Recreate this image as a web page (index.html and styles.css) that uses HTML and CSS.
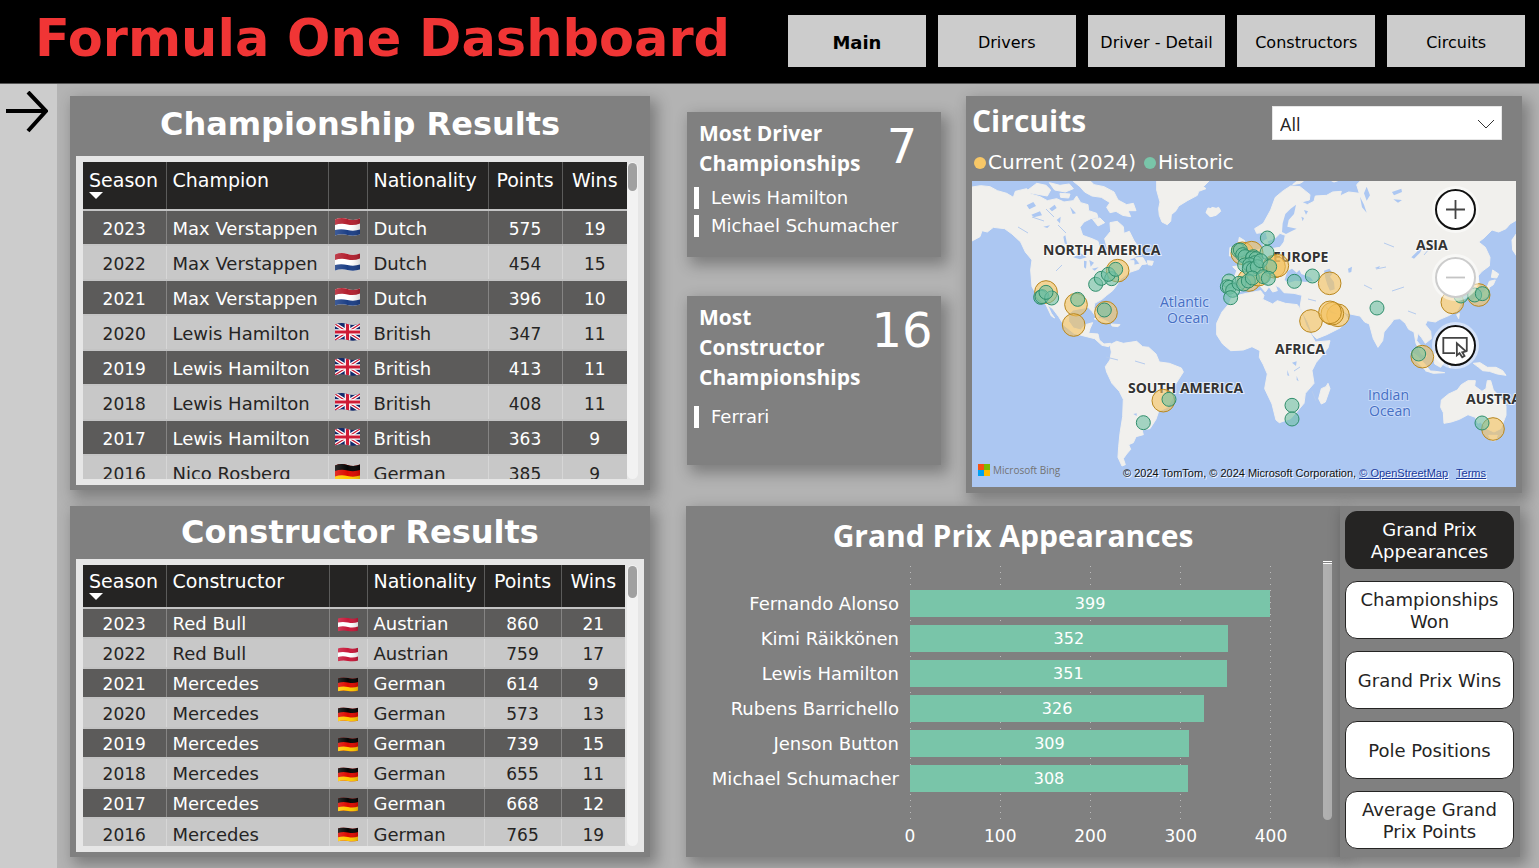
FILE: index.html
```html
<!DOCTYPE html>
<html lang="en">
<head>
<meta charset="utf-8">
<title>Formula One Dashboard</title>
<link rel="stylesheet" href="styles.css">
</head>
<body>
<svg class="defs" aria-hidden="true">
  <defs>
    <clipPath id="wave"><path d="M0 1.5Q6 -1 12.500 1T25 .5V16.500Q19 18.500 12.500 17T0 17.500Z"/></clipPath>
    <linearGradient id="sheen"><stop offset="0" stop-color="#fff" stop-opacity=".15"/><stop offset=".5" stop-color="#fff" stop-opacity="0"/><stop offset="1" stop-color="#000" stop-opacity=".15"/></linearGradient>
    <symbol id="nl" viewBox="0 0 25 18"><g clip-path="url(#wave)"><path fill="#fff" d="M0 0h25v18H0z"/><path fill="#b3202f" d="M0 0H25V5.500Q19 8 12.500 6.500T0 7Z"/><path fill="#1c3f86" d="M0 18H25V11.500Q19 13.500 12.500 12T0 12Z"/><path fill="url(#sheen)" d="M0 0h25v18H0z"/></g></symbol>
    <symbol id="gb" viewBox="0 0 25 18"><g clip-path="url(#wave)"><path fill="#12296b" d="M0 0h25v18H0z"/><path stroke="#fff" stroke-width="3.600" d="M0 1l25 16M25 1L0 17"/><path stroke="#cf1b35" stroke-width="1.300" d="M0 1l25 16M25 1L0 17"/><path stroke="#fff" stroke-width="5.600" d="M12.500 0v18M0 9h25"/><path stroke="#cf1b35" stroke-width="3.200" d="M12.500 0v18M0 9h25"/></g></symbol>
    <symbol id="de" viewBox="0 0 25 18"><g clip-path="url(#wave)"><path fill="#dd0a00" d="M0 0h25v18H0z"/><path fill="#060606" d="M0 0H25V6Q19 8 12.500 6.500T0 7Z"/><path fill="#ffc800" d="M0 18H25V11.500Q19 13.500 12.500 12T0 12.500Z"/><path fill="url(#sheen)" d="M0 0h25v18H0z"/></g></symbol>
    <symbol id="at" viewBox="0 0 25 18"><g clip-path="url(#wave)"><path fill="#c8193a" d="M0 0h25v18H0z"/><path fill="#fff" d="M0 6.500Q6 5 12.500 6.500T25 6V11.500Q19 13.500 12.500 12T0 12Z"/><path fill="url(#sheen)" d="M0 0h25v18H0z"/></g></symbol>
  </defs>
</svg>

<header class="topbar">
  <h1 class="brand">Formula One Dashboard</h1>
  <nav class="tabs">
    <button class="tab tab-on" type="button">Main</button>
    <button class="tab" type="button">Drivers</button>
    <button class="tab" type="button">Driver - Detail</button>
    <button class="tab" type="button">Constructors</button>
    <button class="tab" type="button">Circuits</button>
  </nav>
</header>

<div class="page">
  <aside class="rail">
    <button class="expand" type="button" aria-label="Open filters">
      <svg viewBox="0 0 42 42"><path d="M0 20H40M22 1L40 20L22 40"/></svg>
    </button>
  </aside>

  <main class="board">
    <div class="left">
      <section class="panel results">
        <h2 class="title">Championship Results</h2>
        <div class="frame">
          <div class="view view-drivers">
            <table class="grid grid-drivers">
              <colgroup><col class="c-season"><col class="c-name"><col class="c-flag"><col class="c-nat"><col class="c-pts"><col class="c-wins"></colgroup>
              <thead><tr><th>Season<span class="sort"></span></th><th>Champion</th><th></th><th>Nationality</th><th class="n">Points</th><th class="n">Wins</th></tr></thead>
              <tbody>
                <tr><td>2023</td><td>Max Verstappen</td><td><svg class="flag"><use href="#nl"/></svg></td><td>Dutch</td><td>575</td><td>19</td></tr>
                <tr><td>2022</td><td>Max Verstappen</td><td><svg class="flag"><use href="#nl"/></svg></td><td>Dutch</td><td>454</td><td>15</td></tr>
                <tr><td>2021</td><td>Max Verstappen</td><td><svg class="flag"><use href="#nl"/></svg></td><td>Dutch</td><td>396</td><td>10</td></tr>
                <tr><td>2020</td><td>Lewis Hamilton</td><td><svg class="flag"><use href="#gb"/></svg></td><td>British</td><td>347</td><td>11</td></tr>
                <tr><td>2019</td><td>Lewis Hamilton</td><td><svg class="flag"><use href="#gb"/></svg></td><td>British</td><td>413</td><td>11</td></tr>
                <tr><td>2018</td><td>Lewis Hamilton</td><td><svg class="flag"><use href="#gb"/></svg></td><td>British</td><td>408</td><td>11</td></tr>
                <tr><td>2017</td><td>Lewis Hamilton</td><td><svg class="flag"><use href="#gb"/></svg></td><td>British</td><td>363</td><td>9</td></tr>
                <tr><td>2016</td><td>Nico Rosberg</td><td><svg class="flag"><use href="#de"/></svg></td><td>German</td><td>385</td><td>9</td></tr>
              </tbody>
            </table>
            <div class="track"><div class="thumb"></div></div>
          </div>
        </div>
      </section>

      <section class="panel results">
        <h2 class="title title-tight">Constructor Results</h2>
        <div class="frame">
          <div class="view view-teams">
            <table class="grid grid-teams">
              <colgroup><col class="c-season"><col class="c-name"><col class="c-flag"><col class="c-nat"><col class="c-pts"><col class="c-wins"></colgroup>
              <thead><tr><th>Season<span class="sort"></span></th><th>Constructor</th><th></th><th>Nationality</th><th class="n">Points</th><th class="n">Wins</th></tr></thead>
              <tbody>
                <tr><td>2023</td><td>Red Bull</td><td><svg class="flag"><use href="#at"/></svg></td><td>Austrian</td><td>860</td><td>21</td></tr>
                <tr><td>2022</td><td>Red Bull</td><td><svg class="flag"><use href="#at"/></svg></td><td>Austrian</td><td>759</td><td>17</td></tr>
                <tr><td>2021</td><td>Mercedes</td><td><svg class="flag"><use href="#de"/></svg></td><td>German</td><td>614</td><td>9</td></tr>
                <tr><td>2020</td><td>Mercedes</td><td><svg class="flag"><use href="#de"/></svg></td><td>German</td><td>573</td><td>13</td></tr>
                <tr><td>2019</td><td>Mercedes</td><td><svg class="flag"><use href="#de"/></svg></td><td>German</td><td>739</td><td>15</td></tr>
                <tr><td>2018</td><td>Mercedes</td><td><svg class="flag"><use href="#de"/></svg></td><td>German</td><td>655</td><td>11</td></tr>
                <tr><td>2017</td><td>Mercedes</td><td><svg class="flag"><use href="#de"/></svg></td><td>German</td><td>668</td><td>12</td></tr>
                <tr><td>2016</td><td>Mercedes</td><td><svg class="flag"><use href="#de"/></svg></td><td>German</td><td>765</td><td>19</td></tr>
              </tbody>
            </table>
            <div class="track"><div class="thumb"></div></div>
          </div>
        </div>
      </section>
    </div>

    <div class="right">
      <div class="upper">
        <div class="records">
          <section class="panel record">
            <div class="record-head"><h3 class="record-title">Most Driver Championships</h3><p class="record-value">7</p></div>
            <ul class="holders"><li>Lewis Hamilton</li><li>Michael Schumacher</li></ul>
          </section>
          <section class="panel record">
            <div class="record-head"><h3 class="record-title">Most Constructor Championships</h3><p class="record-value">16</p></div>
            <ul class="holders holders-low"><li>Ferrari</li></ul>
          </section>
        </div>

        <section class="panel circuits">
          <div class="circuits-head">
            <h2 class="heading">Circuits</h2>
            <label class="picker">
              <select class="picker-box" aria-label="Circuit"><option>All</option></select>
              <svg class="chevron" viewBox="0 0 18 10"><path d="M1 1l8 8 8-8"/></svg>
            </label>
          </div>
          <ul class="legend"><li><i class="dot dot-now"></i>Current (2024)</li><li><i class="dot dot-old"></i>Historic</li></ul>
          <div class="map">
            <svg class="world" viewBox="0 0 544 306" preserveAspectRatio="xMidYMid slice" role="img" aria-label="World map of circuits">
              <g class="land" transform="translate(-12 -11) scale(.33333)">
                <path d="M30 52L62 47 90 50 112 62 140 70 160 82 166 64 200 56 212 72 240 80 262 92 290 86 312 96 340 92 350 78 362 98 384 104 386 122 410 130 414 142 392 146 372 156 360 172 368 196 396 206 414 214 420 238 430 252 442 236 434 206 452 184 450 158 472 154 490 170 492 190 508 184 522 212 545 246 524 262 500 272 522 272 522 286 548 280 536 298 512 306 500 314 482 326 470 346 458 362 440 376 426 388 404 400 402 414 418 438 412 446 396 424 384 412 360 416 340 420 326 432 326 454 340 474 362 480 376 464 398 458 390 476 386 490 414 492 418 510 432 522 452 520 446 530 426 526 404 506 372 498 342 490 312 466 296 440 278 416 262 404 274 430 284 444 274 438 258 404 236 386 216 350 212 300 216 270 196 246 182 216 156 192 134 176 100 172 82 186 66 182 60 200 34 214Z"/>
                <path d="M196 66L230 40 258 46 272 60 262 78 228 72ZM268 38L300 46 328 42 340 56 316 66 284 60ZM340 34H392L402 44 432 50 462 66 474 90 500 104 520 100 528 122 504 122 512 140 488 136 468 124 450 128 440 112 450 98 424 82 396 78 374 66 360 50ZM300 70L330 72 326 84 302 82ZM350 104L370 112 362 124 346 116ZM398 148L420 144 434 158 414 168ZM526 264L548 262 560 282 542 284ZM562 272L580 274 576 286 564 284Z"/>
                <path d="M590 30H750L730 50 738 56 716 64 712 76 682 92 656 108 648 122 634 134 632 154 622 164 606 156 598 136 596 116 600 96 590 60ZM738 128L744 114 762 118 776 112 782 124 768 136 752 140ZM402 446L424 446 448 458 430 456ZM454 462L480 464 474 470 456 468Z"/>
                <path d="M450 524L470 514 490 520 530 514 548 530 566 532 588 552 598 576 628 580 664 594 670 606 656 628 642 650 638 684 622 712 596 724 588 748 570 776 546 780 550 794 528 800 520 818 506 824 512 838 500 852 490 866 496 884 486 888 474 862 476 830 480 790 488 740 490 688 478 664 456 640 440 606 436 590 450 570 454 546Z"/>
              </g>
              <g class="land" transform="translate(228 -11) scale(.33333)">
                <path d="M70 318L104 320 110 302 98 290 122 286 128 272 148 266 158 248 176 238 190 236 190 214 200 208 206 226 212 236 240 232 252 216 256 196 240 190 226 204 204 212 198 186 170 190 164 176 190 160 212 120 226 82 250 62 272 48 300 50 330 74 328 90 304 96 322 104 342 94 346 78 380 76 398 66 424 64 420 78 446 66 478 70 470 44 484 30H950V150L930 162 918 176 896 186 876 180 852 204 836 216 856 232 870 262 868 288 846 304 834 318 838 344 826 366 814 370 812 348 796 340 780 340 764 352 776 364 766 378 784 396 772 422 748 436 720 448 706 456 682 452 676 464 692 484 694 506 676 520 664 502 654 490 650 512 668 534 680 560 664 552 648 520 642 486 626 478 616 460 600 446 582 448 572 462 552 486 548 512 534 532 520 506 508 462 494 456 480 438 440 430 426 420 440 440 446 450 420 474 380 494 350 506 338 494 324 456 300 412 306 376 282 370 252 368 238 352 226 346 232 362 218 366 204 346 186 322 172 312 180 332 206 352 196 366 182 350 160 326 144 328 128 348 122 364 98 376 70 366Z"/>
                <path d="M96 380L140 370 182 362 192 376 188 388 218 402 232 392 256 400 292 404 304 424 318 466 334 494 346 516 390 512 384 534 348 578 336 602 342 640 316 670 312 700 290 726 272 746 238 758 228 750 216 702 194 656 202 612 190 584 178 562 180 542 156 530 130 540 92 542 68 522 50 494 50 460 66 426 88 400Z"/>
                <path d="M384 640L390 656 376 696 364 702 356 686 364 656 378 650ZM118 202L134 212 132 230 146 252 136 264 112 266 122 248 114 226ZM90 232L108 232 106 256 88 258ZM20 128L36 112 60 118 52 132 30 140ZM278 44L300 40 310 34 290 34ZM390 30L420 30 402 36ZM868 334L886 330 880 344 868 352 862 378 830 392 818 390 838 378 858 360ZM878 300L896 312 890 324 874 322ZM770 434L778 430 776 446ZM738 474L752 476 748 492 764 506 752 504 740 490ZM632 546L650 556 676 584 690 602 676 600 652 576ZM676 602L706 604 734 608 700 610ZM700 556L724 536 742 544 736 572 722 592 704 582ZM748 560L770 556 764 568 774 588 756 580 750 594 744 580ZM820 580L840 578 862 592 888 592 908 602 918 616 892 612 868 604 848 602 836 592ZM724 690L746 672 772 660 784 644 804 632 826 632 824 648 846 664 858 656 862 632 872 632 880 660 900 680 918 708 918 736 902 776 882 786 856 774 842 756 834 760 826 742 804 734 778 748 754 756 732 760 730 728 722 712ZM866 796L892 796 886 812 874 812ZM936 210L950 190V258L938 240Z"/>
              </g>
              <g class="water" transform="translate(228 -11) scale(.33333)">
                <path d="M254 330L262 304 276 296 290 308 298 300 304 312 330 322 340 332 318 336 286 332 266 338ZM372 302L388 296 398 310 390 320 402 336 404 358 390 362 382 344 376 324ZM288 104L282 132 266 150 262 170 290 176 274 184 258 192 246 186 248 160 256 132 272 116ZM444 296L456 290 454 306 446 308ZM524 294L540 288 536 296ZM634 262L654 242 668 232 660 248 642 266ZM376 408L396 424 412 432 394 430 380 416ZM312 120L324 124 318 134ZM304 140L312 144 308 154ZM276 578L290 574 288 588ZM262 600L268 618 262 616ZM290 618L296 634 290 630ZM246 540L252 540 250 548ZM480 80L492 104 500 128 486 112ZM500 50L510 76 500 92 492 70ZM576 66L604 56 606 66 582 76ZM580 88L606 90 594 98Z"/>
              </g>
              <g class="water" transform="translate(-12 -11) scale(.33333)">
                <path d="M200 106L220 96 228 108 208 118ZM214 134L240 124 246 136 222 142ZM268 116L284 104 290 114 276 124ZM290 150L302 140 300 160ZM310 200L316 196 322 226 314 220ZM340 262L362 250 380 262 360 268ZM372 272L380 274 378 296 372 292ZM388 270L402 278 392 290ZM396 296L416 292 404 302ZM250 170L270 166 262 174ZM330 110L348 130 338 132ZM520 732L530 730 530 738Z"/>
              </g>
              <path class="river" d="M84 90l6-6M134 176l12 3M163 180l10 3M404 88l10-2M412 62l10 4M420 110l12-4M436 130l8 3M392 104l8 4M336 118l8 2M340 210l4 10M322 190l6-4M46 46l10 6M60 36l12 4M86 44l8 8M74 28l8 8M452 74l10-12"/>
              <g class="place">
                <text x="71" y="74">NORTH AMERICA</text>
                <text x="156" y="212">SOUTH AMERICA</text>
                <text x="301" y="81">EUROPE</text>
                <text x="303" y="173">AFRICA</text>
                <text x="444" y="69">ASIA</text>
                <text x="494" y="223">AUSTRALIA</text>
              </g>
              <g class="sea">
                <text x="188" y="126">Atlantic</text><text x="195" y="142">Ocean</text>
                <text x="396" y="219">Indian</text><text x="397" y="235">Ocean</text>
              </g>
              <g transform="translate(-12 -11) scale(.33333)">
                <g class="now"><circle cx="258" cy="366" r="34"/><circle cx="348" cy="404" r="34"/><circle cx="341" cy="465" r="34"/><circle cx="438" cy="428" r="34"/><circle cx="473" cy="302" r="34"/><circle cx="610" cy="692" r="34"/></g>
                <g class="old"><circle cx="242" cy="382" r="21"/><circle cx="246" cy="380" r="21"/><circle cx="275" cy="384" r="21"/><circle cx="258" cy="367" r="21"/><circle cx="353" cy="388" r="21"/><circle cx="433" cy="420" r="21"/><circle cx="407" cy="343" r="21"/><circle cx="424" cy="325" r="21"/><circle cx="455" cy="326" r="21"/><circle cx="445" cy="313" r="21"/><circle cx="467" cy="298" r="21"/><circle cx="627" cy="688" r="21"/><circle cx="550" cy="758" r="21"/></g>
              </g>
              <g transform="translate(228 -11) scale(.33333)">
                <g class="now"><circle cx="127" cy="250" r="34"/><circle cx="155" cy="248" r="34"/><circle cx="147" cy="330" r="34"/><circle cx="175" cy="314" r="34"/><circle cx="222" cy="290" r="34"/><circle cx="232" cy="287" r="34"/><circle cx="333" cy="453" r="34"/><circle cx="414" cy="436" r="34"/><circle cx="397" cy="431" r="34"/><circle cx="390" cy="427" r="34"/><circle cx="389" cy="340" r="34"/><circle cx="757" cy="397" r="34"/><circle cx="836" cy="375" r="34"/><circle cx="667" cy="560" r="34"/><circle cx="879" cy="777" r="34"/></g>
                <g class="old"><circle cx="202" cy="204" r="21"/><circle cx="201" cy="247" r="21"/><circle cx="115" cy="241" r="21"/><circle cx="121" cy="240" r="21"/><circle cx="128" cy="254" r="21"/><circle cx="135" cy="260" r="21"/><circle cx="160" cy="260" r="21"/><circle cx="157" cy="264" r="21"/><circle cx="168" cy="266" r="21"/><circle cx="166" cy="278" r="21"/><circle cx="134" cy="285" r="21"/><circle cx="149" cy="284" r="21"/><circle cx="148" cy="296" r="21"/><circle cx="160" cy="297" r="21"/><circle cx="172" cy="290" r="21"/><circle cx="182" cy="272" r="21"/><circle cx="209" cy="290" r="21"/><circle cx="87" cy="333" r="21"/><circle cx="82" cy="350" r="21"/><circle cx="88" cy="352" r="21"/><circle cx="98" cy="361" r="21"/><circle cx="92" cy="383" r="21"/><circle cx="117" cy="340" r="21"/><circle cx="131" cy="342" r="21"/><circle cx="145" cy="333" r="21"/><circle cx="157" cy="324" r="21"/><circle cx="190" cy="320" r="21"/><circle cx="205" cy="325" r="21"/><circle cx="283" cy="334" r="21"/><circle cx="337" cy="318" r="21"/><circle cx="531" cy="414" r="21"/><circle cx="783" cy="378" r="21"/><circle cx="824" cy="375" r="21"/><circle cx="847" cy="371" r="21"/><circle cx="656" cy="552" r="21"/><circle cx="846" cy="759" r="21"/><circle cx="276" cy="706" r="21"/><circle cx="276" cy="747" r="21"/></g>
              </g>
            </svg>
            <div class="map-tools">
              <button class="tool" type="button" aria-label="Zoom in"><svg viewBox="0 0 41 41"><path d="M20.500 10v21M10 20.500h21"/></svg></button>
              <button class="tool" type="button" aria-label="Zoom out" disabled><svg viewBox="0 0 41 41"><path d="M10 20.500h21"/></svg></button>
              <button class="tool" type="button" aria-label="Select area"><svg viewBox="0 0 41 41"><path class="fine" d="M20 29H7V12H33V27"/><path class="fine" d="M22 18V31.500L25 29 28 33.500 30.500 32 28 28 32 27Z"/></svg></button>
            </div>
            <div class="map-foot">
              <span class="bing"><svg viewBox="0 0 12 12"><path fill="#f65314" d="M0 0h6v6H0z"/><path fill="#7cbb00" d="M6 0h6v6H6z"/><path fill="#00a1f1" d="M0 6h6v6H0z"/><path fill="#ffbb00" d="M6 6h6v6H6z"/></svg>Microsoft Bing</span>
              <span class="credit">© 2024 TomTom, © 2024 Microsoft Corporation, <a href="#osm">© OpenStreetMap</a><a class="terms" href="#terms">Terms</a></span>
            </div>
          </div>
        </section>
      </div>

      <div class="lower">
        <section class="panel chart">
          <h2 class="heading heading-mid">Grand Prix Appearances</h2>
          <div class="chart-body">
            <ul class="names"><li>Fernando Alonso</li><li>Kimi Räikkönen</li><li>Lewis Hamilton</li><li>Rubens Barrichello</li><li>Jenson Button</li><li>Michael Schumacher</li></ul>
            <div class="plot">
              <div class="area">
                <div class="lines"><i></i><i></i><i></i><i></i><i></i></div>
                <div class="bar" style="width:99.75%">399</div>
                <div class="bar" style="width:88%">352</div>
                <div class="bar" style="width:87.75%">351</div>
                <div class="bar" style="width:81.5%">326</div>
                <div class="bar" style="width:77.25%">309</div>
                <div class="bar" style="width:77%">308</div>
              </div>
              <div class="axis"><span>0</span><span>100</span><span>200</span><span>300</span><span>400</span></div>
            </div>
            <div class="slider"></div>
          </div>
        </section>
        <section class="panel slicer">
          <button class="choice choice-on" type="button">Grand Prix Appearances</button>
          <button class="choice" type="button">Championships Won</button>
          <button class="choice" type="button">Grand Prix Wins</button>
          <button class="choice" type="button">Pole Positions</button>
          <button class="choice" type="button">Average Grand Prix Points</button>
        </section>
      </div>
    </div>
  </main>
</div>
</body>
</html>
```

FILE: styles.css
```css
* { box-sizing: border-box; }
body {
  margin: 0;
  min-height: 100vh;
  display: flex;
  flex-direction: column;
  background: #b3b3b3;
  color: #fff;
  font-family: "DejaVu Sans", Verdana, sans-serif;
  font-size: 18px;
}
h1, h2, h3, p, ul { margin: 0; padding: 0; }
ul { list-style: none; }
button { font-family: inherit; cursor: pointer; }
.defs { position: absolute; width: 0; height: 0; }

.topbar {
  display: flex;
  align-items: center;
  justify-content: space-between;
  height: 84px;
  padding: 0 14px 2px 35px;
  background: #000;
  border-bottom: 1px solid #555;
}
.brand { color: #f03535; font-size: 51px; line-height: 60px; padding-bottom: 4px; white-space: nowrap; }
.tabs { display: flex; gap: 12px; width: 737px; }
.tab {
  flex: 1;
  height: 52px;
  padding: 3px 0 0;
  border: 0;
  background: #ccc;
  color: #000;
  font-size: 16px;
  white-space: nowrap;
}
.tab-on { font-size: 18px; font-weight: 700; }

.page { flex: 1; display: flex; }
.rail { flex: 0 0 57px; background: #ccc; }
.expand { display: block; margin: 7px 6px; padding: 0; border: 0; background: none; width: 42px; height: 42px; }
.expand svg { display: block; width: 42px; height: 42px; fill: none; stroke: #000; stroke-width: 4; }

.board {
  flex: 1;
  display: grid;
  grid-template-columns: minmax(0, 580fr) minmax(0, 836fr);
  column-gap: 36px;
  align-items: start;
  padding: 12px 17px 11px 13px;
}
.panel { background: #808080; box-shadow: 5px 6px 14px 2px rgba(0, 0, 0, .3); }

.left, .right { display: flex; flex-direction: column; }
.left { gap: 16px; }
.right { gap: 13px; }

.results { padding: 0 6px; }
.results .frame { margin-bottom: 5px; }
.title { font-size: 32px; line-height: 56px; padding-bottom: 4px; text-align: center; }
.title-tight { line-height: 53px; padding-bottom: 0; }
.frame { padding: 6px 6px 6px 7px; background: #e6e6e6; }
.view { display: flex; align-items: stretch; overflow: hidden; color: #252423; }
.view-drivers { height: 317px; }
.view-teams { height: 281px; }
.grid { flex: 1; align-self: flex-start; table-layout: fixed; border-collapse: collapse; width: 100%; }
.c-season { width: 83px; }
.c-flag { width: 39px; }
.c-nat { width: 121px; }
.c-pts { width: 74px; }
.c-wins { width: 65px; }
.grid-teams { margin-right: 2px; }
.grid-teams .c-flag { width: 38px; }
.grid-teams .c-nat { width: 117px; }
.grid-teams .c-pts { width: 77px; }
.grid-teams .c-wins { width: 64px; }
.grid th {
  height: 48px;
  padding: 6px 0 0 6px;
  background: #252423;
  color: #fff;
  font-size: 19px;
  font-weight: 400;
  line-height: 24px;
  text-align: left;
  vertical-align: top;
}
.grid-teams th { height: 43px; padding-top: 4px; }
.grid .n { padding-left: 0; text-align: center; }
.grid th, .grid td { border-right: 1px solid rgba(255, 255, 255, .25); }
.grid th:last-child, .grid td:last-child { border-right: 0; }
.grid td { height: 35px; padding: 2px 0 0 6px; border-top: 2px solid #c4c4c4; line-height: 20px; background: #c8c8c8; white-space: nowrap; }
.grid-teams td { height: 30px; }
.grid tr:nth-child(odd) td { background: #5c5b5a; color: #fff; }
.grid td:nth-child(1), .grid td:nth-child(5), .grid td:nth-child(6) { padding-left: 0; font-size: 17px; text-align: center; }
.sort { display: block; width: 14px; height: 7px; background: #fff; clip-path: polygon(0 0, 100% 0, 50% 100%); }
.flag { display: block; width: 25px; height: 18px; margin-bottom: 3px; }
.grid-teams .flag { width: 20px; height: 15px; margin: 0 0 0 2px; }
.track { flex: 0 0 11px; padding: 1px; border-radius: 6px; background: #f2f2f2; }
.thumb { height: 28px; border-radius: 5px; background: #a0a0a0; }
.view-teams .thumb { height: 32px; }

.upper { display: grid; grid-template-columns: minmax(0, 255fr) minmax(0, 556fr); column-gap: 25px; align-items: start; }
.records { display: flex; flex-direction: column; gap: 39px; padding: 16px 0 0 1px; }
.record { padding: 6px 7px 20px; }
.record-head { display: flex; justify-content: space-between; padding-left: 5px; }
.record-title { font: 700 21px/30px "Open Sans", "Noto Sans", sans-serif; width: 170px; }
.record-value { flex: 0 0 64px; padding-top: 2px; font-size: 48px; line-height: 52px; text-align: center; }
.holders { display: flex; flex-direction: column; gap: 6px; padding-top: 9px; }
.holders-low { padding: 14px 0 17px; }
.holders li { padding-left: 12px; border-left: 5px solid #fff; line-height: 22px; }

.circuits { padding: 10px 6px 6px; }
.circuits-head { display: flex; justify-content: space-between; padding-right: 14px; }
.heading { font: 700 30px/30px "Open Sans", "Noto Sans", sans-serif; }
.heading-mid { text-align: center; line-height: 60px; }
.picker { position: relative; display: block; width: 230px; }
.picker-box {
  appearance: none;
  width: 100%;
  height: 34px;
  padding: 2px 7px 0;
  border: 1px solid #e6e6e6;
  border-radius: 0;
  background: #fff;
  color: #252423;
  font: 18px "Open Sans", "Noto Sans", sans-serif;
}
.chevron { position: absolute; right: 7px; top: 13px; width: 18px; height: 10px; fill: none; stroke: #333; pointer-events: none; }
.legend { display: flex; gap: 8px; padding: 10px 0 6px 2px; font-size: 20px; line-height: 25px; }
.legend li { display: flex; align-items: center; gap: 2px; }
.dot { width: 12px; height: 12px; border-radius: 50%; }
.dot-now { background: #f7c767; }
.dot-old { background: #79c5a9; }

.map { position: relative; overflow: hidden; aspect-ratio: 544 / 306; background: #acc7f2; }
.world { display: block; width: 100%; height: 100%; }
.land path { fill: #f1f0ed; stroke: #f1f0ed; stroke-width: 3; stroke-linejoin: round; }
.water path { fill: #acc7f2; }
.river { fill: none; stroke: #b5cbee; stroke-width: 1; }
.place text { font: 700 14px "Open Sans", sans-serif; fill: #333; stroke: #fff; stroke-width: 2; stroke-opacity: .7; paint-order: stroke; }
.sea text { font: 400 14px "Open Sans", sans-serif; fill: #466fc4; stroke: #c6d9f8; stroke-width: 2; paint-order: stroke; }
.now circle { fill: #f5c25c; fill-opacity: .6; stroke: #b8871f; stroke-width: 3; }
.old circle { fill: #6fc0a3; fill-opacity: .6; stroke: #2f8e6b; stroke-width: 3; }
.map-tools { position: absolute; top: 8px; right: 40px; display: flex; flex-direction: column; gap: 27px; }
.tool { width: 41px; height: 41px; padding: 0; border: 2px solid #111; border-radius: 50%; background: #fff; box-shadow: 0 0 0 3px rgba(255, 255, 255, .5); }
.tool svg { display: block; width: 37px; height: 37px; fill: none; stroke: #444; stroke-width: 2; }
.tool .fine { fill: #fff; }
.tool:disabled { border-color: #ccc; }
.tool:disabled svg { stroke: #c4c4c4; }
.map-foot {
  position: absolute;
  left: 6px;
  right: 30px;
  bottom: 6px;
  display: flex;
  align-items: flex-end;
  justify-content: space-between;
  color: #111;
  font: 11px/16px "Liberation Sans", Arial, sans-serif;
  white-space: nowrap;
}
.bing { display: flex; align-items: center; gap: 3px; color: #737373; font: 10px/22px "Open Sans", sans-serif; }
.bing svg { width: 12px; height: 12px; }
.credit { text-shadow: 1px 1px 0 #fff; }
.credit a { color: #1c3a9c; }
.terms { margin-left: 8px; }

.lower { display: grid; grid-template-columns: minmax(0, 654fr) minmax(0, 180fr); padding-right: 2px; }
.chart { padding: 0 8px 10px; }
.chart-body { display: grid; grid-template-columns: 205px minmax(0, 361fr) 9px; }
.names { padding-top: 24px; text-align: right; white-space: nowrap; }
.names li { height: 27px; line-height: 27px; }
.names, .area { display: flex; flex-direction: column; gap: 8px; }
.plot { margin: 0 52px 0 11px; }
.area { position: relative; padding: 24px 0 28px; }
.lines { position: absolute; inset: 0; display: flex; justify-content: space-between; }
.lines i { width: 1px; background: repeating-linear-gradient(#bbb 0 1px, transparent 1px 6px); }
.bar { position: relative; height: 27px; background: #79c5a9; font-size: 16px; line-height: 27px; text-align: center; }
.axis { display: flex; justify-content: space-between; padding-top: 6px; font-size: 17px; line-height: 20px; }
.axis span { display: flex; justify-content: center; width: 0; }
.slider { margin: -5px 0 26px; border-top: 1px solid #fff; border-radius: 0 0 5px 5px; background: linear-gradient(#808080 0 1px, #fff 1px 2px, #b0b0b0 2px); }
.slicer { display: flex; flex-direction: column; gap: 12px; padding: 5px 6px 8px 5px; }
.choice {
  flex: 1;
  min-height: 58px;
  padding: 1px 8px 0;
  border: 1px solid #252423;
  border-radius: 12px;
  background: #fff;
  color: #252423;
  font-size: 18px;
  line-height: 22px;
}
.choice-on { background: #252423; color: #fff; }
```
